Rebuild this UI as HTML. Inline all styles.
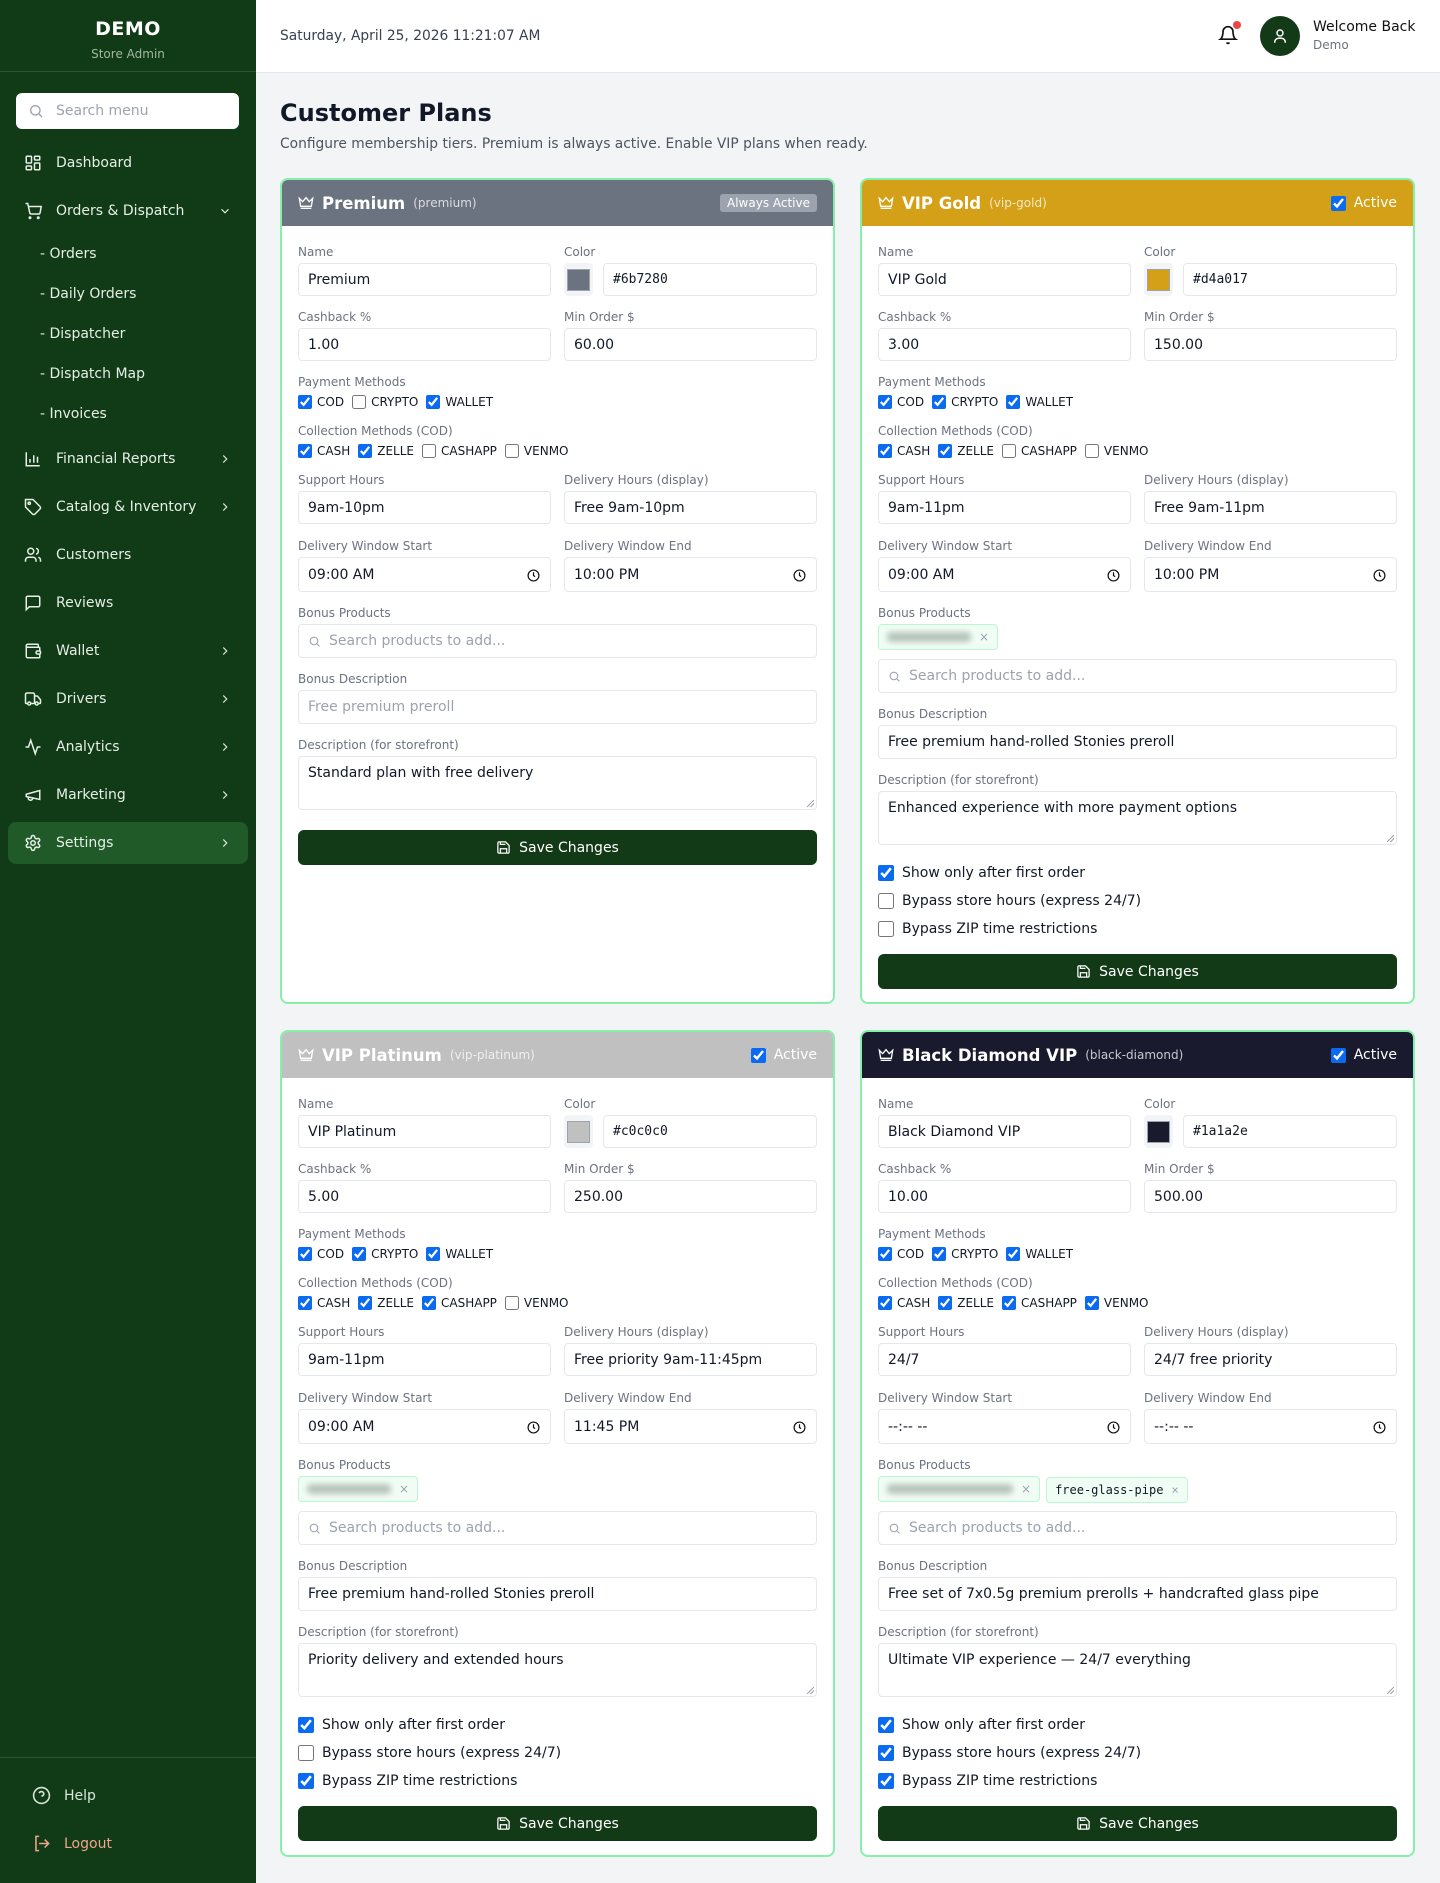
<!DOCTYPE html>
<html><head><meta charset="utf-8"><style>
*{box-sizing:border-box;margin:0;padding:0}
body{width:1440px;height:1883px;background:#f3f4f6;font-family:"DejaVu Sans","Liberation Sans",sans-serif;color:#111827;position:relative;overflow:hidden}
.sb{position:absolute;left:0;top:0;width:256px;height:1883px;background:#113a16;color:#e5efe6}
.brand{height:72px;border-bottom:1px solid #2a5530;text-align:center}
.brand b{display:block;padding-top:18px;font-size:19px;color:#fff;letter-spacing:.5px}
.brand span{display:block;font-size:12px;color:#9fb8a2;margin-top:7px}
.search{position:absolute;left:16px;top:93px;width:223px;height:36px;background:#fff;border-radius:6px;font-size:14px;color:#9ca3af;padding-left:40px;line-height:36px}
.search svg{position:absolute;left:12px;top:10px}
.ni{position:absolute;left:8px;width:240px;height:42px;display:flex;align-items:center;font-size:14px;color:#e5efe6;border-radius:8px}
.ni svg.ic{position:absolute;left:16px}
.ni .t{position:absolute;left:48px}
.ni .ch{position:absolute;left:210px}
.sub{position:absolute;left:40px;font-size:14px;color:#e5efe6}
.hdr{position:absolute;left:256px;top:0;width:1184px;height:73px;background:#fff;border-bottom:1px solid #e5e7eb}
.card{position:absolute;width:555px;border:2px solid #86efac;border-radius:8px;background:#fff;overflow:hidden}
.chd{height:46px;display:flex;align-items:center;padding:0 16px 0 16px;color:#fff;position:relative}
.chd .nm{font-size:16.5px;font-weight:bold;margin-left:8px}
.chd .sl{font-size:12px;opacity:.75;margin-left:8px}
.chd .rt{position:absolute;right:16px;display:flex;align-items:center;font-size:14px;top:15px}
.cb{padding:18px 16px 16px}
.r2{display:grid;grid-template-columns:253px 253px;gap:13px}
.f{margin-bottom:13px}
.f2{margin-bottom:14px}
.l{display:block;font-size:12px;line-height:16px;color:#6b7280;margin-bottom:3px}
.lc{margin-bottom:4px}
.in{height:33px;border:1px solid #e5e7eb;border-radius:4px;padding:0 9px;font-size:14px;display:flex;align-items:center;color:#111827;position:relative;background:#fff}
.ph{color:#9ca3af}
.tm{height:35px}
.tm svg{position:absolute;right:10px;top:11px}
.sw{display:flex;gap:10px}
.swb{width:29px;height:33px;background:#f3f4f6;border-radius:4px;display:flex;align-items:center;justify-content:center}
.swb i{display:block;width:23px;height:22px;border:1px solid #9ca3af}
.mono{font-family:"DejaVu Sans Mono","Liberation Mono",monospace;font-size:13px}
.cks{display:flex;align-items:center;height:16px;font-size:12px;color:#111827;margin-bottom:13px}
.cks label{display:flex;align-items:center;margin-right:8px}
input[type=checkbox]{width:14px;height:14px;margin:0 5px 0 0;accent-color:#0b6bf0}
.ta{height:54px;border:1px solid #e5e7eb;border-radius:4px;padding:8px 9px;font-size:14px;position:relative;margin-bottom:20px}
.ta:after{content:"";position:absolute;right:2px;bottom:2px;width:7px;height:7px;background:linear-gradient(135deg,transparent 45%,#9ca3af 45%,#9ca3af 55%,transparent 55%,transparent 70%,#9ca3af 70%,#9ca3af 80%,transparent 80%)}
.btn{height:35px;background:#133a17;border-radius:6px;color:#fff;font-size:14px;display:flex;align-items:center;justify-content:center;gap:8px}
.chip{display:inline-flex;align-items:center;height:26px;background:#f0fdf4;border:1px solid #bbf7d0;border-radius:4px;padding:0 8px;margin-right:6px;font-size:12px;color:#111827}
.chip .bl{display:inline-block;height:10px;background:#b7c4bb;filter:blur(3px);border-radius:4px}
.chip .x{color:#9ca3af;margin-left:8px;font-size:12px}
.chips{margin-bottom:9px;height:26px}
.sr svg{margin-right:8px}
.opt{display:flex;align-items:center;height:20px;font-size:14px;margin-bottom:8px}
.opt input{width:16px;height:16px;margin-right:8px}
.opts{margin-top:-2px;margin-bottom:15px}
</style></head><body>
<div class="sb">
 <div class="brand"><b>DEMO</b><span>Store Admin</span></div>
 <div class="search"><svg width="16" height="16" viewBox="0 0 24 24" fill="none" stroke="#9ca3af" stroke-width="2"><circle cx="11" cy="11" r="7"/><path d="M21 21l-4.3-4.3"/></svg>Search menu</div>
 <div class="ni" style="top:142px"><svg class="ic" width="18" height="18" viewBox="0 0 24 24" fill="none" stroke="#e5efe6" stroke-width="2"><rect x="3" y="3" width="7" height="9" rx="1"/><rect x="14" y="3" width="7" height="5" rx="1"/><rect x="14" y="12" width="7" height="9" rx="1"/><rect x="3" y="16" width="7" height="5" rx="1"/></svg><span class="t">Dashboard</span></div>
 <div class="ni" style="top:190px"><svg class="ic" width="18" height="18" viewBox="0 0 24 24" fill="none" stroke="#e5efe6" stroke-width="2"><circle cx="8" cy="21" r="1"/><circle cx="19" cy="21" r="1"/><path d="M2 2h3l2.7 12.4a2 2 0 0 0 2 1.6h9.7a2 2 0 0 0 2-1.6L23 6H6"/></svg><span class="t">Orders &amp; Dispatch</span><svg class="ch" width="14" height="14" viewBox="0 0 24 24" fill="none" stroke="#e5efe6" stroke-width="2"><path d="M6 9l6 6 6-6"/></svg></div>
 <div class="sub" style="top:246px">- Orders</div>
 <div class="sub" style="top:286px">- Daily Orders</div>
 <div class="sub" style="top:326px">- Dispatcher</div>
 <div class="sub" style="top:366px">- Dispatch Map</div>
 <div class="sub" style="top:406px">- Invoices</div>
 <div class="ni" style="top:438px"><svg class="ic" width="18" height="18" viewBox="0 0 24 24" fill="none" stroke="#e5efe6" stroke-width="2"><path d="M3 3v18h18M8 17v-5M13 17V7M18 17v-8"/></svg><span class="t">Financial Reports</span><svg class="ch" width="14" height="14" viewBox="0 0 24 24" fill="none" stroke="#e5efe6" stroke-width="2"><path d="M9 6l6 6-6 6"/></svg></div>
 <div class="ni" style="top:486px"><svg class="ic" width="18" height="18" viewBox="0 0 24 24" fill="none" stroke="#e5efe6" stroke-width="2"><path d="M12 2H2v10l9.3 9.3a2.4 2.4 0 0 0 3.4 0l6.6-6.6a2.4 2.4 0 0 0 0-3.4z"/><circle cx="7" cy="7" r="1.5"/></svg><span class="t">Catalog &amp; Inventory</span><svg class="ch" width="14" height="14" viewBox="0 0 24 24" fill="none" stroke="#e5efe6" stroke-width="2"><path d="M9 6l6 6-6 6"/></svg></div>
 <div class="ni" style="top:534px"><svg class="ic" width="18" height="18" viewBox="0 0 24 24" fill="none" stroke="#e5efe6" stroke-width="2"><circle cx="9" cy="7" r="4"/><path d="M2 21v-2a4 4 0 0 1 4-4h6a4 4 0 0 1 4 4v2M16 3.1a4 4 0 0 1 0 7.8M22 21v-2a4 4 0 0 0-3-3.9"/></svg><span class="t">Customers</span></div>
 <div class="ni" style="top:582px"><svg class="ic" width="18" height="18" viewBox="0 0 24 24" fill="none" stroke="#e5efe6" stroke-width="2"><path d="M21 15a2 2 0 0 1-2 2H7l-4 4V5a2 2 0 0 1 2-2h14a2 2 0 0 1 2 2z"/></svg><span class="t">Reviews</span></div>
 <div class="ni" style="top:630px"><svg class="ic" width="18" height="18" viewBox="0 0 24 24" fill="none" stroke="#e5efe6" stroke-width="2"><path d="M19 7V4a1 1 0 0 0-1-1H5a2 2 0 0 0 0 4h15a1 1 0 0 1 1 1v4h-3a2 2 0 0 0 0 4h3a1 1 0 0 0 1-1v-2a1 1 0 0 0-1-1M3 5v14a2 2 0 0 0 2 2h15a1 1 0 0 0 1-1v-4"/></svg><span class="t">Wallet</span><svg class="ch" width="14" height="14" viewBox="0 0 24 24" fill="none" stroke="#e5efe6" stroke-width="2"><path d="M9 6l6 6-6 6"/></svg></div>
 <div class="ni" style="top:678px"><svg class="ic" width="18" height="18" viewBox="0 0 24 24" fill="none" stroke="#e5efe6" stroke-width="2"><path d="M14 18V6a2 2 0 0 0-2-2H4a2 2 0 0 0-2 2v11a1 1 0 0 0 1 1h2M15 18H9M19 18h2a1 1 0 0 0 1-1v-3.6a1 1 0 0 0-.2-.6l-3.5-4.4A1 1 0 0 0 17.5 8H14"/><circle cx="17" cy="18" r="2"/><circle cx="7" cy="18" r="2"/></svg><span class="t">Drivers</span><svg class="ch" width="14" height="14" viewBox="0 0 24 24" fill="none" stroke="#e5efe6" stroke-width="2"><path d="M9 6l6 6-6 6"/></svg></div>
 <div class="ni" style="top:726px"><svg class="ic" width="18" height="18" viewBox="0 0 24 24" fill="none" stroke="#e5efe6" stroke-width="2"><path d="M22 12h-4l-3 9L9 3l-3 9H2"/></svg><span class="t">Analytics</span><svg class="ch" width="14" height="14" viewBox="0 0 24 24" fill="none" stroke="#e5efe6" stroke-width="2"><path d="M9 6l6 6-6 6"/></svg></div>
 <div class="ni" style="top:774px"><svg class="ic" width="18" height="18" viewBox="0 0 24 24" fill="none" stroke="#e5efe6" stroke-width="2"><path d="M3 11l18-5v12L3 14v-3zM11.6 16.8a3 3 0 1 1-5.8-1.6"/></svg><span class="t">Marketing</span><svg class="ch" width="14" height="14" viewBox="0 0 24 24" fill="none" stroke="#e5efe6" stroke-width="2"><path d="M9 6l6 6-6 6"/></svg></div>
 <div class="ni" style="top:822px;background:#1f5a28"><svg class="ic" width="18" height="18" viewBox="0 0 24 24" fill="none" stroke="#e5efe6" stroke-width="2"><circle cx="12" cy="12" r="3"/><path d="M12.2 2h-.4a2 2 0 0 0-2 2v.2a2 2 0 0 1-1 1.7l-.4.3a2 2 0 0 1-2 0l-.2-.1a2 2 0 0 0-2.7.7l-.2.4a2 2 0 0 0 .7 2.7l.2.1a2 2 0 0 1 1 1.7v.5a2 2 0 0 1-1 1.7l-.2.1a2 2 0 0 0-.7 2.7l.2.4a2 2 0 0 0 2.7.7l.2-.1a2 2 0 0 1 2 0l.4.3a2 2 0 0 1 1 1.7v.2a2 2 0 0 0 2 2h.4a2 2 0 0 0 2-2v-.2a2 2 0 0 1 1-1.7l.4-.3a2 2 0 0 1 2 0l.2.1a2 2 0 0 0 2.7-.7l.2-.4a2 2 0 0 0-.7-2.7l-.2-.1a2 2 0 0 1-1-1.7v-.5a2 2 0 0 1 1-1.7l.2-.1a2 2 0 0 0 .7-2.7l-.2-.4a2 2 0 0 0-2.7-.7l-.2.1a2 2 0 0 1-2 0l-.4-.3a2 2 0 0 1-1-1.7V4a2 2 0 0 0-2-2z"/></svg><span class="t">Settings</span><svg class="ch" width="14" height="14" viewBox="0 0 24 24" fill="none" stroke="#e5efe6" stroke-width="2"><path d="M9 6l6 6-6 6"/></svg></div>
 <div style="position:absolute;left:0;top:1757px;width:256px;border-top:1px solid #2a5530"></div>
 <div style="position:absolute;left:32px;top:1786px;display:flex;align-items:center;font-size:14px;color:#d8e6da"><svg width="19" height="19" viewBox="0 0 24 24" fill="none" stroke="#d8e6da" stroke-width="2"><circle cx="12" cy="12" r="10"/><path d="M9.1 9a3 3 0 0 1 5.8 1c0 2-3 3-3 3M12 17h.01"/></svg><span style="margin-left:13px">Help</span></div>
 <div style="position:absolute;left:32px;top:1834px;display:flex;align-items:center;font-size:14px;color:#f0a58a"><svg width="19" height="19" viewBox="0 0 24 24" fill="none" stroke="#f0a58a" stroke-width="2"><path d="M9 3H5v18h4M16 17l5-5-5-5M21 12H9"/></svg><span style="margin-left:13px">Logout</span></div>
</div>

<div class="hdr">
 <div style="position:absolute;left:24px;top:28px;font-size:13.8px;color:#374151">Saturday, April 25, 2026 11:21:07 AM</div>
 <svg style="position:absolute;left:962px;top:25px" width="20" height="20" viewBox="0 0 24 24" fill="none" stroke="#111" stroke-width="2"><path d="M6 8a6 6 0 0 1 12 0c0 7 3 9 3 9H3s3-2 3-9M10.3 21a1.9 1.9 0 0 0 3.4 0"/></svg>
 <div style="position:absolute;left:977px;top:21px;width:8px;height:8px;border-radius:50%;background:#ef4444"></div>
 <div style="position:absolute;left:1004px;top:16px;width:40px;height:40px;border-radius:50%;background:#133a17"><svg style="position:absolute;left:11px;top:11px" width="18" height="18" viewBox="0 0 24 24" fill="none" stroke="#fff" stroke-width="2"><circle cx="12" cy="8" r="4"/><path d="M5 21v-1a5 5 0 0 1 5-5h4a5 5 0 0 1 5 5v1"/></svg></div>
 <div style="position:absolute;left:1057px;top:19px;font-size:14px;color:#111">Welcome Back</div>
 <div style="position:absolute;left:1057px;top:38px;font-size:12px;color:#6b7280">Demo</div>
</div>

<div style="position:absolute;left:280px;top:99px;font-size:24px;font-weight:bold;color:#111827">Customer Plans</div>
<div style="position:absolute;left:280px;top:136px;font-size:13.8px;color:#4b5563">Configure membership tiers. Premium is always active. Enable VIP plans when ready.</div>

<!-- Premium -->
<div class="card" style="left:280px;top:178px;height:826px">
 <div class="chd" style="background:#6b7280"><svg width="16" height="16" viewBox="0 0 24 24" fill="none" stroke="#fff" stroke-width="2"><path d="M2 5l5 5 5-6 5 6 5-5-2 12H4zM4 20h16"/></svg><span class="nm">Premium</span><span class="sl">(premium)</span><span class="rt" style="background:#9ca3af;font-size:12px;padding:2px 7px;border-radius:3px;top:14px">Always Active</span></div>
 <div class="cb">
  <div class="r2"><div class="f"><span class="l">Name</span><div class="in">Premium</div></div><div class="f"><span class="l">Color</span><div class="sw"><div class="swb"><i style="background:#6b7280"></i></div><div class="in mono" style="flex:1">#6b7280</div></div></div></div>
  <div class="r2"><div class="f"><span class="l">Cashback %</span><div class="in">1.00</div></div><div class="f"><span class="l">Min Order $</span><div class="in">60.00</div></div></div>
  <span class="l lc">Payment Methods</span>
  <div class="cks"><label><input type="checkbox" checked>COD</label><label><input type="checkbox">CRYPTO</label><label><input type="checkbox" checked>WALLET</label></div>
  <span class="l lc">Collection Methods (COD)</span>
  <div class="cks"><label><input type="checkbox" checked>CASH</label><label><input type="checkbox" checked>ZELLE</label><label><input type="checkbox">CASHAPP</label><label><input type="checkbox">VENMO</label></div>
  <div class="r2"><div class="f f2"><span class="l">Support Hours</span><div class="in">9am-10pm</div></div><div class="f f2"><span class="l">Delivery Hours (display)</span><div class="in">Free 9am-10pm</div></div></div>
  <div class="r2"><div class="f"><span class="l">Delivery Window Start</span><div class="in tm">09:00 AM<svg width="13" height="13" viewBox="0 0 24 24" fill="none" stroke="#111" stroke-width="2.2"><circle cx="12" cy="12" r="10"/><path d="M12 6v6l3 2"/></svg></div></div><div class="f"><span class="l">Delivery Window End</span><div class="in tm">10:00 PM<svg width="13" height="13" viewBox="0 0 24 24" fill="none" stroke="#111" stroke-width="2.2"><circle cx="12" cy="12" r="10"/><path d="M12 6v6l3 2"/></svg></div></div></div>
  <div class="f"><span class="l">Bonus Products</span><div class="in sr ph" style="height:34px"><svg width="13" height="13" viewBox="0 0 24 24" fill="none" stroke="#9ca3af" stroke-width="2"><circle cx="11" cy="11" r="7"/><path d="M21 21l-4.3-4.3"/></svg>Search products to add...</div></div>
  <div class="f"><span class="l">Bonus Description</span><div class="in ph" style="height:34px">Free premium preroll</div></div>
  <span class="l">Description (for storefront)</span><div class="ta">Standard plan with free delivery</div>
  <div class="btn"><svg width="15" height="15" viewBox="0 0 24 24" fill="none" stroke="#fff" stroke-width="2"><path d="M15.2 3H5a2 2 0 0 0-2 2v14a2 2 0 0 0 2 2h14a2 2 0 0 0 2-2V8.8L15.2 3zM17 21v-7H7v7M7 3v4h8"/></svg>Save Changes</div>
 </div>
</div>

<!-- VIP Gold -->
<div class="card" style="left:860px;top:178px;height:826px">
 <div class="chd" style="background:#d4a017"><svg width="16" height="16" viewBox="0 0 24 24" fill="none" stroke="#fff" stroke-width="2"><path d="M2 5l5 5 5-6 5 6 5-5-2 12H4zM4 20h16"/></svg><span class="nm">VIP Gold</span><span class="sl">(vip-gold)</span><span class="rt"><input type="checkbox" checked style="width:15px;height:15px;margin-right:8px">Active</span></div>
 <div class="cb">
  <div class="r2"><div class="f"><span class="l">Name</span><div class="in">VIP Gold</div></div><div class="f"><span class="l">Color</span><div class="sw"><div class="swb"><i style="background:#d4a017"></i></div><div class="in mono" style="flex:1">#d4a017</div></div></div></div>
  <div class="r2"><div class="f"><span class="l">Cashback %</span><div class="in">3.00</div></div><div class="f"><span class="l">Min Order $</span><div class="in">150.00</div></div></div>
  <span class="l lc">Payment Methods</span>
  <div class="cks"><label><input type="checkbox" checked>COD</label><label><input type="checkbox" checked>CRYPTO</label><label><input type="checkbox" checked>WALLET</label></div>
  <span class="l lc">Collection Methods (COD)</span>
  <div class="cks"><label><input type="checkbox" checked>CASH</label><label><input type="checkbox" checked>ZELLE</label><label><input type="checkbox">CASHAPP</label><label><input type="checkbox">VENMO</label></div>
  <div class="r2"><div class="f f2"><span class="l">Support Hours</span><div class="in">9am-11pm</div></div><div class="f f2"><span class="l">Delivery Hours (display)</span><div class="in">Free 9am-11pm</div></div></div>
  <div class="r2"><div class="f"><span class="l">Delivery Window Start</span><div class="in tm">09:00 AM<svg width="13" height="13" viewBox="0 0 24 24" fill="none" stroke="#111" stroke-width="2.2"><circle cx="12" cy="12" r="10"/><path d="M12 6v6l3 2"/></svg></div></div><div class="f"><span class="l">Delivery Window End</span><div class="in tm">10:00 PM<svg width="13" height="13" viewBox="0 0 24 24" fill="none" stroke="#111" stroke-width="2.2"><circle cx="12" cy="12" r="10"/><path d="M12 6v6l3 2"/></svg></div></div></div>
  <div class="f"><span class="l">Bonus Products</span><div class="chips"><span class="chip"><span class="bl" style="width:84px"></span><span class="x">×</span></span></div><div class="in sr ph" style="height:34px"><svg width="13" height="13" viewBox="0 0 24 24" fill="none" stroke="#9ca3af" stroke-width="2"><circle cx="11" cy="11" r="7"/><path d="M21 21l-4.3-4.3"/></svg>Search products to add...</div></div>
  <div class="f"><span class="l">Bonus Description</span><div class="in" style="height:34px">Free premium hand-rolled Stonies preroll</div></div>
  <span class="l">Description (for storefront)</span><div class="ta">Enhanced experience with more payment options</div>
  <div class="opts"><div class="opt"><input type="checkbox" checked>Show only after first order</div><div class="opt"><input type="checkbox">Bypass store hours (express 24/7)</div><div class="opt"><input type="checkbox">Bypass ZIP time restrictions</div></div>
  <div class="btn"><svg width="15" height="15" viewBox="0 0 24 24" fill="none" stroke="#fff" stroke-width="2"><path d="M15.2 3H5a2 2 0 0 0-2 2v14a2 2 0 0 0 2 2h14a2 2 0 0 0 2-2V8.8L15.2 3zM17 21v-7H7v7M7 3v4h8"/></svg>Save Changes</div>
 </div>
</div>

<!-- VIP Platinum -->
<div class="card" style="left:280px;top:1030px;height:827px">
 <div class="chd" style="background:#c0c0c0"><svg width="16" height="16" viewBox="0 0 24 24" fill="none" stroke="#fff" stroke-width="2"><path d="M2 5l5 5 5-6 5 6 5-5-2 12H4zM4 20h16"/></svg><span class="nm">VIP Platinum</span><span class="sl">(vip-platinum)</span><span class="rt"><input type="checkbox" checked style="width:15px;height:15px;margin-right:8px">Active</span></div>
 <div class="cb">
  <div class="r2"><div class="f"><span class="l">Name</span><div class="in">VIP Platinum</div></div><div class="f"><span class="l">Color</span><div class="sw"><div class="swb"><i style="background:#c0c0c0"></i></div><div class="in mono" style="flex:1">#c0c0c0</div></div></div></div>
  <div class="r2"><div class="f"><span class="l">Cashback %</span><div class="in">5.00</div></div><div class="f"><span class="l">Min Order $</span><div class="in">250.00</div></div></div>
  <span class="l lc">Payment Methods</span>
  <div class="cks"><label><input type="checkbox" checked>COD</label><label><input type="checkbox" checked>CRYPTO</label><label><input type="checkbox" checked>WALLET</label></div>
  <span class="l lc">Collection Methods (COD)</span>
  <div class="cks"><label><input type="checkbox" checked>CASH</label><label><input type="checkbox" checked>ZELLE</label><label><input type="checkbox" checked>CASHAPP</label><label><input type="checkbox">VENMO</label></div>
  <div class="r2"><div class="f f2"><span class="l">Support Hours</span><div class="in">9am-11pm</div></div><div class="f f2"><span class="l">Delivery Hours (display)</span><div class="in">Free priority 9am-11:45pm</div></div></div>
  <div class="r2"><div class="f"><span class="l">Delivery Window Start</span><div class="in tm">09:00 AM<svg width="13" height="13" viewBox="0 0 24 24" fill="none" stroke="#111" stroke-width="2.2"><circle cx="12" cy="12" r="10"/><path d="M12 6v6l3 2"/></svg></div></div><div class="f"><span class="l">Delivery Window End</span><div class="in tm">11:45 PM<svg width="13" height="13" viewBox="0 0 24 24" fill="none" stroke="#111" stroke-width="2.2"><circle cx="12" cy="12" r="10"/><path d="M12 6v6l3 2"/></svg></div></div></div>
  <div class="f"><span class="l">Bonus Products</span><div class="chips"><span class="chip"><span class="bl" style="width:84px"></span><span class="x">×</span></span></div><div class="in sr ph" style="height:34px"><svg width="13" height="13" viewBox="0 0 24 24" fill="none" stroke="#9ca3af" stroke-width="2"><circle cx="11" cy="11" r="7"/><path d="M21 21l-4.3-4.3"/></svg>Search products to add...</div></div>
  <div class="f"><span class="l">Bonus Description</span><div class="in" style="height:34px">Free premium hand-rolled Stonies preroll</div></div>
  <span class="l">Description (for storefront)</span><div class="ta">Priority delivery and extended hours</div>
  <div class="opts"><div class="opt"><input type="checkbox" checked>Show only after first order</div><div class="opt"><input type="checkbox">Bypass store hours (express 24/7)</div><div class="opt"><input type="checkbox" checked>Bypass ZIP time restrictions</div></div>
  <div class="btn"><svg width="15" height="15" viewBox="0 0 24 24" fill="none" stroke="#fff" stroke-width="2"><path d="M15.2 3H5a2 2 0 0 0-2 2v14a2 2 0 0 0 2 2h14a2 2 0 0 0 2-2V8.8L15.2 3zM17 21v-7H7v7M7 3v4h8"/></svg>Save Changes</div>
 </div>
</div>

<!-- Black Diamond -->
<div class="card" style="left:860px;top:1030px;height:827px">
 <div class="chd" style="background:#1a1a2e"><svg width="16" height="16" viewBox="0 0 24 24" fill="none" stroke="#fff" stroke-width="2"><path d="M2 5l5 5 5-6 5 6 5-5-2 12H4zM4 20h16"/></svg><span class="nm">Black Diamond VIP</span><span class="sl">(black-diamond)</span><span class="rt"><input type="checkbox" checked style="width:15px;height:15px;margin-right:8px">Active</span></div>
 <div class="cb">
  <div class="r2"><div class="f"><span class="l">Name</span><div class="in">Black Diamond VIP</div></div><div class="f"><span class="l">Color</span><div class="sw"><div class="swb"><i style="background:#1a1a2e"></i></div><div class="in mono" style="flex:1">#1a1a2e</div></div></div></div>
  <div class="r2"><div class="f"><span class="l">Cashback %</span><div class="in">10.00</div></div><div class="f"><span class="l">Min Order $</span><div class="in">500.00</div></div></div>
  <span class="l lc">Payment Methods</span>
  <div class="cks"><label><input type="checkbox" checked>COD</label><label><input type="checkbox" checked>CRYPTO</label><label><input type="checkbox" checked>WALLET</label></div>
  <span class="l lc">Collection Methods (COD)</span>
  <div class="cks"><label><input type="checkbox" checked>CASH</label><label><input type="checkbox" checked>ZELLE</label><label><input type="checkbox" checked>CASHAPP</label><label><input type="checkbox" checked>VENMO</label></div>
  <div class="r2"><div class="f f2"><span class="l">Support Hours</span><div class="in">24/7</div></div><div class="f f2"><span class="l">Delivery Hours (display)</span><div class="in">24/7 free priority</div></div></div>
  <div class="r2"><div class="f"><span class="l">Delivery Window Start</span><div class="in tm">--:-- --<svg width="13" height="13" viewBox="0 0 24 24" fill="none" stroke="#111" stroke-width="2.2"><circle cx="12" cy="12" r="10"/><path d="M12 6v6l3 2"/></svg></div></div><div class="f"><span class="l">Delivery Window End</span><div class="in tm">--:-- --<svg width="13" height="13" viewBox="0 0 24 24" fill="none" stroke="#111" stroke-width="2.2"><circle cx="12" cy="12" r="10"/><path d="M12 6v6l3 2"/></svg></div></div></div>
  <div class="f"><span class="l">Bonus Products</span><div class="chips"><span class="chip"><span class="bl" style="width:126px"></span><span class="x">×</span></span><span class="chip mono" style="font-size:12px">free-glass-pipe<span class="x">×</span></span></div><div class="in sr ph" style="height:34px"><svg width="13" height="13" viewBox="0 0 24 24" fill="none" stroke="#9ca3af" stroke-width="2"><circle cx="11" cy="11" r="7"/><path d="M21 21l-4.3-4.3"/></svg>Search products to add...</div></div>
  <div class="f"><span class="l">Bonus Description</span><div class="in" style="height:34px">Free set of 7x0.5g premium prerolls + handcrafted glass pipe</div></div>
  <span class="l">Description (for storefront)</span><div class="ta">Ultimate VIP experience — 24/7 everything</div>
  <div class="opts"><div class="opt"><input type="checkbox" checked>Show only after first order</div><div class="opt"><input type="checkbox" checked>Bypass store hours (express 24/7)</div><div class="opt"><input type="checkbox" checked>Bypass ZIP time restrictions</div></div>
  <div class="btn"><svg width="15" height="15" viewBox="0 0 24 24" fill="none" stroke="#fff" stroke-width="2"><path d="M15.2 3H5a2 2 0 0 0-2 2v14a2 2 0 0 0 2 2h14a2 2 0 0 0 2-2V8.8L15.2 3zM17 21v-7H7v7M7 3v4h8"/></svg>Save Changes</div>
 </div>
</div>
</body></html>
